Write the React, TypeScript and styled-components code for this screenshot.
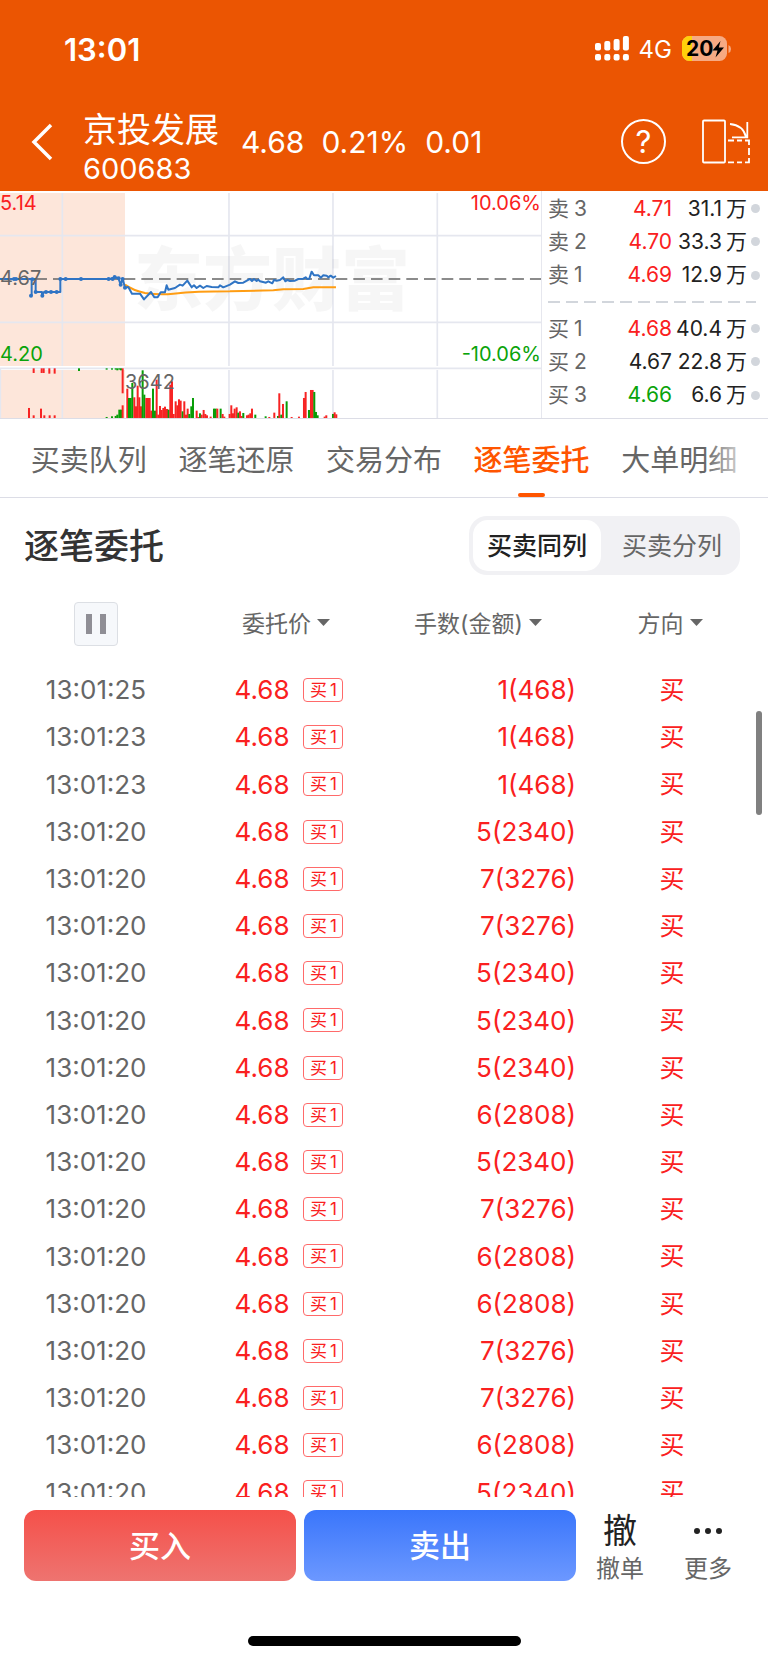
import React from 'react';
import styled, { createGlobalStyle } from 'styled-components';

const GlobalStyle = createGlobalStyle`
  * { box-sizing: border-box; }
  body {
    margin: 0;
    background: #fff;
    color: #333;
    font-family: Inter, "Noto Sans CJK SC", sans-serif;
  }
  button {
    margin: 0;
    padding: 0;
    border: 0;
    background: none;
    color: inherit;
    font: inherit;
    cursor: pointer;
  }
  svg { display: block; }
`;

const RED = '#fa2020';
const GREEN = '#0aa30a';
const GREY = '#666';

const Screen = styled.div`
  display: flex;
  flex-direction: column;
  height: 100vh;
  min-height: 1000px;
  overflow: hidden;
`;

/* ---------- header ---------- */

const Header = styled.header`
  flex: none;
  background: #eb5502;
  color: #fff;
`;

const StatusBar = styled.div`
  display: flex;
  align-items: center;
  justify-content: space-between;
  height: 92px;
  padding: 6px 36px 0 64px;
`;

const Clock = styled.time`
  font-size: 31px;
  font-weight: 600;
`;

const StatusIcons = styled.div`
  display: flex;
  align-items: center;
  gap: 10px;
  font-size: 24px;
`;

const NavBar = styled.div`
  display: flex;
  align-items: center;
  height: 99px;
  padding: 0 18px 0 31px;
`;

const BackButton = styled.button`
  width: 22px;
  margin-right: 30px;
`;

const StockName = styled.h1`
  margin: 0 22px 0 0;
  padding-top: 12px;
  font-size: 34px;
  font-weight: 400;
  line-height: 42px;
`;

const StockCode = styled.span`
  display: block;
  font-size: 29px;
  line-height: 36px;
`;

const Quote = styled.div`
  display: flex;
  flex: 1;
  gap: 17px;
  font-size: 30px;
`;

const HelpButton = styled.button`
  width: 45px;
  height: 45px;
  border: 2px solid #fff;
  border-radius: 50%;
  margin-right: 36px;
  font-size: 31px;
  line-height: 40px;
`;

/* ---------- chart and order book ---------- */

const Market = styled.section`
  display: grid;
  flex: none;
  grid-template-columns: 541fr 227fr;
  height: 228px;
  border-bottom: 1px solid #dcdde6;
`;

const Chart = styled.svg`
  width: 100%;
  height: 227px;
  font-size: 20px;
`;

const Book = styled.div`
  display: flex;
  flex-direction: column;
  padding: 1px 8px 6px 6px;
  border-left: 1px solid #e6e7ee;
`;

const BookSide = styled.div`
  display: flex;
  flex: 1;
  flex-direction: column;
`;

const BookDivider = styled.svg`
  width: 100%;
  height: 20px;
`;

const BookRow = styled.div`
  display: grid;
  flex: 1;
  grid-template-columns: 48px 1fr 75px 13px;
  align-items: center;
  font-size: 21px;
  line-height: 30px;
  text-align: right;
  white-space: nowrap;
`;

const BookLabel = styled.span`
  display: flex;
  gap: 5px;
  color: ${GREY};
`;

const BookPrice = styled.span<{ $tone: string }>`
  color: ${(p) => p.$tone};
`;

const Amount = styled.span`
  display: flex;
  justify-content: flex-end;
  gap: 4px;
  color: #222;
`;

const Dot = styled.i`
  justify-self: end;
  width: 9px;
  height: 9px;
  border-radius: 50%;
  background: #d2d6dc;
`;

/* ---------- tabs ---------- */

const Tabs = styled.nav`
  position: relative;
  display: grid;
  flex: none;
  grid-template-columns: repeat(5, 1fr);
  height: 79px;
  padding: 0 15px;
  border-bottom: 1px solid #dcdde6;
  &::after {
    content: '';
    position: absolute;
    inset: 0 0 0 auto;
    width: 64px;
    background: linear-gradient(90deg, rgba(255, 255, 255, 0), #fff 80%);
  }
`;

const Tab = styled.button<{ $active: boolean }>`
  display: flex;
  flex-direction: column;
  align-items: center;
  justify-content: space-between;
  padding-top: 20px;
  color: ${(p) => (p.$active ? '#ff5500' : GREY)};
  font-size: 29px;
  font-weight: ${(p) => (p.$active ? 500 : 400)};
  line-height: 44px;
  white-space: nowrap;
  &::after {
    content: '';
    width: 27px;
    height: 4px;
    border-radius: 2px;
    background: ${(p) => (p.$active ? '#ff5500' : 'transparent')};
  }
`;

/* ---------- order list ---------- */

const Orders = styled.section`
  position: relative;
  display: flex;
  flex: 1;
  flex-direction: column;
  min-height: 0;
`;

const OrdersHeader = styled.div`
  display: flex;
  align-items: center;
  justify-content: space-between;
  flex: none;
  height: 95px;
  padding: 0 28px 0 24px;
`;

const OrdersTitle = styled.h2`
  margin: 0;
  padding-bottom: 4px;
  font-size: 35px;
  font-weight: 500;
`;

const Segmented = styled.div`
  display: flex;
  gap: 7px;
  padding: 4px;
  border-radius: 18px;
  background: #f1f1f4;
`;

const Segment = styled.button<{ $active: boolean }>`
  width: 128px;
  height: 51px;
  padding-bottom: 4px;
  border-radius: 15px;
  background: ${(p) => (p.$active ? '#fff' : 'transparent')};
  color: ${(p) => (p.$active ? '#222' : GREY)};
  font-size: 25px;
  font-weight: ${(p) => (p.$active ? 500 : 400)};
`;

const Table = styled.table`
  display: flex;
  flex: 1;
  flex-direction: column;
  min-height: 0;
`;

const TableHead = styled.thead`
  display: block;
  flex: none;
`;

const TableBody = styled.tbody`
  display: grid;
  flex: 1;
  grid-auto-rows: 47px 47px 48px 47px 47px;
  min-height: 0;
  padding-top: 11px;
  overflow: hidden;
`;

const Row = styled.tr`
  display: grid;
  grid-template-columns: repeat(4, 1fr);
  align-items: center;
  font-size: 26px;
`;

const HeadRow = styled(Row)`
  height: 62px;
  font-size: 23px;
`;

const HeadCell = styled.th`
  display: flex;
  justify-content: center;
  padding: 0;
  color: ${GREY};
  font-weight: 400;
`;

const SortButton = styled.button`
  display: flex;
  align-items: center;
  gap: 6px;
  padding: 0 4px 4px 0;
  white-space: nowrap;
`;

const PauseButton = styled.button`
  display: flex;
  align-items: center;
  justify-content: center;
  gap: 8px;
  width: 44px;
  height: 44px;
  border: 1px solid #dcdfe4;
  border-radius: 4px;
  background: #f6f8fb;
  &::before,
  &::after {
    content: '';
    width: 6px;
    height: 20px;
    background: #8f8e95;
  }
`;

const Cell = styled.td`
  display: flex;
  align-items: center;
  justify-content: center;
  padding: 0;
  color: ${RED};
`;

const TimeCell = styled(Cell)`
  color: ${GREY};
`;

const PriceCell = styled(Cell)`
  gap: 14px;
  padding-left: 2px;
`;

const VolumeCell = styled(Cell)`
  justify-content: flex-end;
`;

const SideCell = styled(Cell)`
  padding-bottom: 4px;
  font-size: 25px;
`;

const Badge = styled.span`
  display: flex;
  align-items: center;
  justify-content: center;
  gap: 3px;
  width: 40px;
  height: 24px;
  border: 1px solid #ff6a6a;
  border-radius: 4px;
  font-size: 17px;
  line-height: 22px;
`;

const ScrollThumb = styled.div`
  position: absolute;
  top: 213px;
  right: 6px;
  width: 6px;
  height: 104px;
  border-radius: 3px;
  background: #808080;
`;

/* ---------- footer ---------- */

const Footer = styled.footer`
  flex: none;
  padding: 13px 16px 17px 24px;
`;

const Actions = styled.div`
  display: flex;
  height: 71px;
  margin-bottom: 55px;
`;

const TradeButton = styled.button<{ $from: string; $to: string }>`
  flex: 1;
  padding-bottom: 4px;
  border-radius: 12px;
  background: linear-gradient(${(p) => p.$from}, ${(p) => p.$to});
  color: #fff;
  font-size: 31px;
  font-weight: 500;
  & + & { margin-left: 8px; }
`;

const Tool = styled.button`
  display: flex;
  flex-direction: column;
  align-items: center;
  width: 88px;
  color: ${GREY};
  font-size: 24px;
  line-height: 22px;
`;

const ToolIcon = styled.span`
  display: flex;
  align-items: center;
  height: 48px;
  padding-bottom: 7px;
  color: #222;
  font-size: 34px;
`;

const HomeIndicator = styled.div`
  width: 273px;
  height: 10px;
  margin: 0 auto;
  border-radius: 5px;
  background: #000;
  transform: translateX(-4px);
`;

/* ---------- data ---------- */

type Level = [side: string, no: number, price: string, amount: string, tone: string];

const ASKS: Level[] = [
  ['卖', 3, '4.71', '31.1', RED],
  ['卖', 2, '4.70', '33.3', RED],
  ['卖', 1, '4.69', '12.9', RED],
];

const BIDS: Level[] = [
  ['买', 1, '4.68', '40.4', RED],
  ['买', 2, '4.67', '22.8', '#222'],
  ['买', 3, '4.66', '6.6', GREEN],
];

const TABS = ['买卖队列', '逐笔还原', '交易分布', '逐笔委托', '大单明细'];

const ORDERS: [string, string][] = [
  ['13:01:25', '1(468)'],
  ['13:01:23', '1(468)'],
  ['13:01:23', '1(468)'],
  ['13:01:20', '5(2340)'],
  ['13:01:20', '7(3276)'],
  ['13:01:20', '7(3276)'],
  ['13:01:20', '5(2340)'],
  ['13:01:20', '5(2340)'],
  ['13:01:20', '5(2340)'],
  ['13:01:20', '6(2808)'],
  ['13:01:20', '5(2340)'],
  ['13:01:20', '7(3276)'],
  ['13:01:20', '6(2808)'],
  ['13:01:20', '6(2808)'],
  ['13:01:20', '7(3276)'],
  ['13:01:20', '7(3276)'],
  ['13:01:20', '6(2808)'],
  ['13:01:20', '5(2340)'],
];

/* Volume bars as "x r|g height", in thirds of a pixel. */
const VOLUME =
  '87r30 101r8 123r28 133r8 149r8 164r8 320g3 336g5 347g6 352g10 358g25 363g25 368r38 ' +
  '382r88 387g60 392g60 397g105 403r62 408r35 413r97 418r62 423r35 428g143 433g70 439r60 444r60 449r60 454r22 ' +
  '459g88 465g22 470r115 475r10 480r36 485r24 490r30 495r34 501r27 506g25 511r100 516r110 521r12 527r50 532r38 ' +
  '537r56 542r52 548g20 553r50 558r10 563r28 568g12 574g35 579g60 590r22 595r3 600g14 605r10 611r24 616r12 621r8 ' +
  '632r4 642g28 647g28 652r28 662g28 668r12 673r4 689r12 694r38 699r14 704r28 710r32 715g16 720r20 725r6 730g15 ' +
  '741r8 746r10 751r14 756r28 766g10 797g5 808r3 823r16 834g6 838r74 844g10 849r42 860g50 875r3 897r4 912r60 ' +
  '917r78 927g24 933r84 938r84 943g78 948g18 953g8 974r4 979r8 999g12 1004r17 1009r11';

const VOLUME_TOP = '101r14 125r14 131r14 148r16 164r16 237g8 320g4 336g4 347g4 352g6 358g4 363g6 368r75';

const parseBars = (text: string) =>
  text.split(' ').map((item) => {
    const [, x, tone, h] = item.match(/(\d+)([rg])(\d+)/)!;
    return { x: Number(x), h: Number(h), fill: tone === 'r' ? '#f72323' : '#079d07' };
  });

const PRICE_LINE =
  'M0 273H95V322V273H107V312H126V324L132 312H181V273H330L344 268L355 270L362 290L368 272L375 299L385 297L396 317H420L432 334' +
  'L453 312L463 328H473L482 313H495L500 292L505 305L525 300L540 290L548 293L562 278L575 298L582 292L590 300L600 293L610 300' +
  'L620 294L635 297L655 298L660 292L670 298L690 290L705 280L715 285L730 284L750 273L756 279L762 273L770 279L775 275L780 280' +
  'L798 284L805 280L817 286L822 276L830 278L840 276L850 268L856 280L862 276L870 279L885 278L895 273L910 272L917 268L922 273' +
  'L928 272L935 251L942 262H955L963 269L970 262L980 263L985 268L992 263L1000 269L1008 264';

const PRICE_DOTS: [number, number][] = [
  [42, 273], [48, 273], [97, 274], [93, 323], [107, 312], [127, 323], [138, 312], [153, 312], [170, 312],
  [181, 273], [197, 273], [243, 273], [326, 273], [338, 273], [344, 267], [356, 271], [368, 273], [362, 290], [375, 299],
];

/* ---------- pieces ---------- */

const TimelineChart = () => (
  <Chart viewBox="0 191 541 227" preserveAspectRatio="xMinYMin slice" role="img" aria-label="分时走势">
    <g transform="translate(0 188) scale(.3333)">
      <path d="M0 15H375V534H0ZM3 546H375V690H3Z" fill="#fde6da" />
      <path
        d="M187 15V534M687 15V534M999 15V534M1312 15V534M187 546V690M687 546V690M999 546V690M1312 546V690M0 143H1624M0 403H1624M0 541H1624M1 541V690"
        stroke="#e5e7ef"
        strokeWidth="5"
        fill="none"
      />
    </g>
    <text x="134" y="305" fontSize="69" fontWeight="900" fill="#000" fillOpacity=".035">东方财富</text>
    <g transform="translate(0 188) scale(.3333)" fill="none">
      <path d="M0 273H1624" stroke="#666" strokeWidth="4" strokeDasharray="35 18" />
      {parseBars(VOLUME).map((b, i) => (
        <rect key={i} x={b.x - 3} y={690 - b.h} width="6" height={b.h} fill={b.fill} />
      ))}
      {parseBars(VOLUME_TOP).map((b, i) => (
        <rect key={i} x={b.x - 3} y={541} width="6" height={b.h} fill={b.fill} />
      ))}
      <path
        d="M375 290Q400 308 435 315Q480 322 520 317Q590 310 690 310L820 307L850 304L910 303L940 298H1008"
        stroke="#ff9d13"
        strokeWidth="6"
      />
      <path d={PRICE_LINE} stroke="#2f74c4" strokeWidth="6" strokeLinejoin="round" />
      {PRICE_DOTS.map(([x, y]) => (
        <circle key={`${x}-${y}`} cx={x} cy={y} r="6" fill="#2f74c4" />
      ))}
    </g>
    <text x="0" y="210" fill={RED}>5.14</text>
    <text x="0" y="285" fill={GREY}>4.67</text>
    <text x="0" y="361" fill={GREEN}>4.20</text>
    <text x="125" y="389" fill={GREY}>3642</text>
    <text x="541" y="210" fill={RED} textAnchor="end">10.06%</text>
    <text x="541" y="361" fill={GREEN} textAnchor="end">-10.06%</text>
  </Chart>
);

const Levels = ({ rows }: { rows: Level[] }) => (
  <BookSide>
    {rows.map(([side, no, price, amount, tone]) => (
      <BookRow key={no}>
        <BookLabel>
          <span>{side}</span>
          <span>{no}</span>
        </BookLabel>
        <BookPrice $tone={tone}>{price}</BookPrice>
        <Amount>
          <span>{amount}</span>
          <span>万</span>
        </Amount>
        <Dot />
      </BookRow>
    ))}
  </BookSide>
);

const Sortable = ({ label }: { label: string }) => (
  <HeadCell scope="col">
    <SortButton type="button">
      {label}
      <svg width="13" height="7" viewBox="0 0 13 7" aria-hidden="true">
        <path d="M0 0H13L6.500 7Z" fill="#666" />
      </svg>
    </SortButton>
  </HeadCell>
);

const SignalIcon = () => (
  <svg width="34" height="26" viewBox="0 0 34 26" fill="#fff" aria-hidden="true">
    {[7, 5, 3, 0].map((top, i) => (
      <React.Fragment key={top}>
        <rect x={i * 9.3} y={top} width="6" height={14.5 - top} rx="2" />
        <rect x={i * 9.3} y="18" width="6" height="6.5" rx="2" />
      </React.Fragment>
    ))}
  </svg>
);

const BatteryIcon = () => (
  <svg width="50" height="26" viewBox="0 0 50 26" role="img" aria-label="电量 20%">
    <rect width="45" height="25" rx="7.5" fill="#f6aa83" />
    <path d="M10 0H7.500A7.500 7.500 0 0 0 0 7.500V17.500A7.500 7.500 0 0 0 7.500 25H10Z" fill="#ffd00a" />
    <path d="M46.500 9Q49 10 49 13T46.500 17Z" fill="#f6aa83" />
    <text x="4" y="20" fontSize="21" fontWeight="700" fill="#000">20</text>
    <path d="M38.500 5L30.500 14.500H35.500L33.500 21.500L42 11.500H36.800Z" fill="#000" />
  </svg>
);

const RotateIcon = () => (
  <svg width="48" height="46" viewBox="0 0 48 46" fill="none" stroke="#fff" strokeWidth="1.800" aria-hidden="true">
    <rect x="1" y="1.500" width="22" height="42" rx="1" />
    <path d="M28 5Q41 6 44 18M45.300 3V18.300H30" />
    <path d="M26 21.500H32M35 21.500H40M43 21.500H47V26M47 29V36M47 39V43.300H43M40 43.300H35M32 43.300H26" />
  </svg>
);

export default function App() {
  return (
    <Screen>
      <GlobalStyle />
      <Header>
        <StatusBar>
          <Clock>13:01</Clock>
          <StatusIcons>
            <SignalIcon />
            <span>4G</span>
            <BatteryIcon />
          </StatusIcons>
        </StatusBar>
        <NavBar>
          <BackButton type="button" aria-label="返回">
            <svg width="22" height="38" viewBox="0 0 22 38" fill="none" stroke="#fff" strokeWidth="3.500">
              <path d="M20 2L3 19L20 36" />
            </svg>
          </BackButton>
          <StockName>
            京投发展
            <StockCode>600683</StockCode>
          </StockName>
          <Quote>
            <span>4.68</span>
            <span>0.21%</span>
            <span>0.01</span>
          </Quote>
          <HelpButton type="button" aria-label="帮助">?</HelpButton>
          <button type="button" aria-label="横屏">
            <RotateIcon />
          </button>
        </NavBar>
      </Header>

      <Market>
        <TimelineChart />
        <Book>
          <Levels rows={ASKS} />
          <BookDivider aria-hidden="true">
            <path d="M0 10H208" stroke="#d2d6dc" strokeWidth="2" strokeDasharray="12 6" />
          </BookDivider>
          <Levels rows={BIDS} />
        </Book>
      </Market>

      <Tabs>
        {TABS.map((tab, i) => (
          <Tab key={tab} type="button" $active={i === 3}>
            {tab}
          </Tab>
        ))}
      </Tabs>

      <Orders>
        <OrdersHeader>
          <OrdersTitle>逐笔委托</OrdersTitle>
          <Segmented>
            <Segment type="button" $active>买卖同列</Segment>
            <Segment type="button" $active={false}>买卖分列</Segment>
          </Segmented>
        </OrdersHeader>
        <Table>
          <TableHead>
            <HeadRow>
              <HeadCell scope="col">
                <PauseButton type="button" aria-label="暂停" />
              </HeadCell>
              <Sortable label="委托价" />
              <Sortable label="手数(金额)" />
              <Sortable label="方向" />
            </HeadRow>
          </TableHead>
          <TableBody>
            {ORDERS.map(([time, volume], i) => (
              <Row key={i}>
                <TimeCell>{time}</TimeCell>
                <PriceCell>
                  4.68
                  <Badge>
                    <span>买</span>
                    <span>1</span>
                  </Badge>
                </PriceCell>
                <VolumeCell>{volume}</VolumeCell>
                <SideCell>买</SideCell>
              </Row>
            ))}
          </TableBody>
        </Table>
        <ScrollThumb />
      </Orders>

      <Footer>
        <Actions>
          <TradeButton type="button" $from="#f5504a" $to="#ee7470">买入</TradeButton>
          <TradeButton type="button" $from="#3a76fb" $to="#6c98ff">卖出</TradeButton>
          <Tool type="button">
            <ToolIcon>撤</ToolIcon>
            撤单
          </Tool>
          <Tool type="button">
            <ToolIcon>
              <svg width="30" height="8" viewBox="0 0 30 8" fill="currentColor" aria-hidden="true">
                <circle cx="4" cy="4" r="3" />
                <circle cx="15" cy="4" r="3" />
                <circle cx="26" cy="4" r="3" />
              </svg>
            </ToolIcon>
            更多
          </Tool>
        </Actions>
        <HomeIndicator />
      </Footer>
    </Screen>
  );
}
